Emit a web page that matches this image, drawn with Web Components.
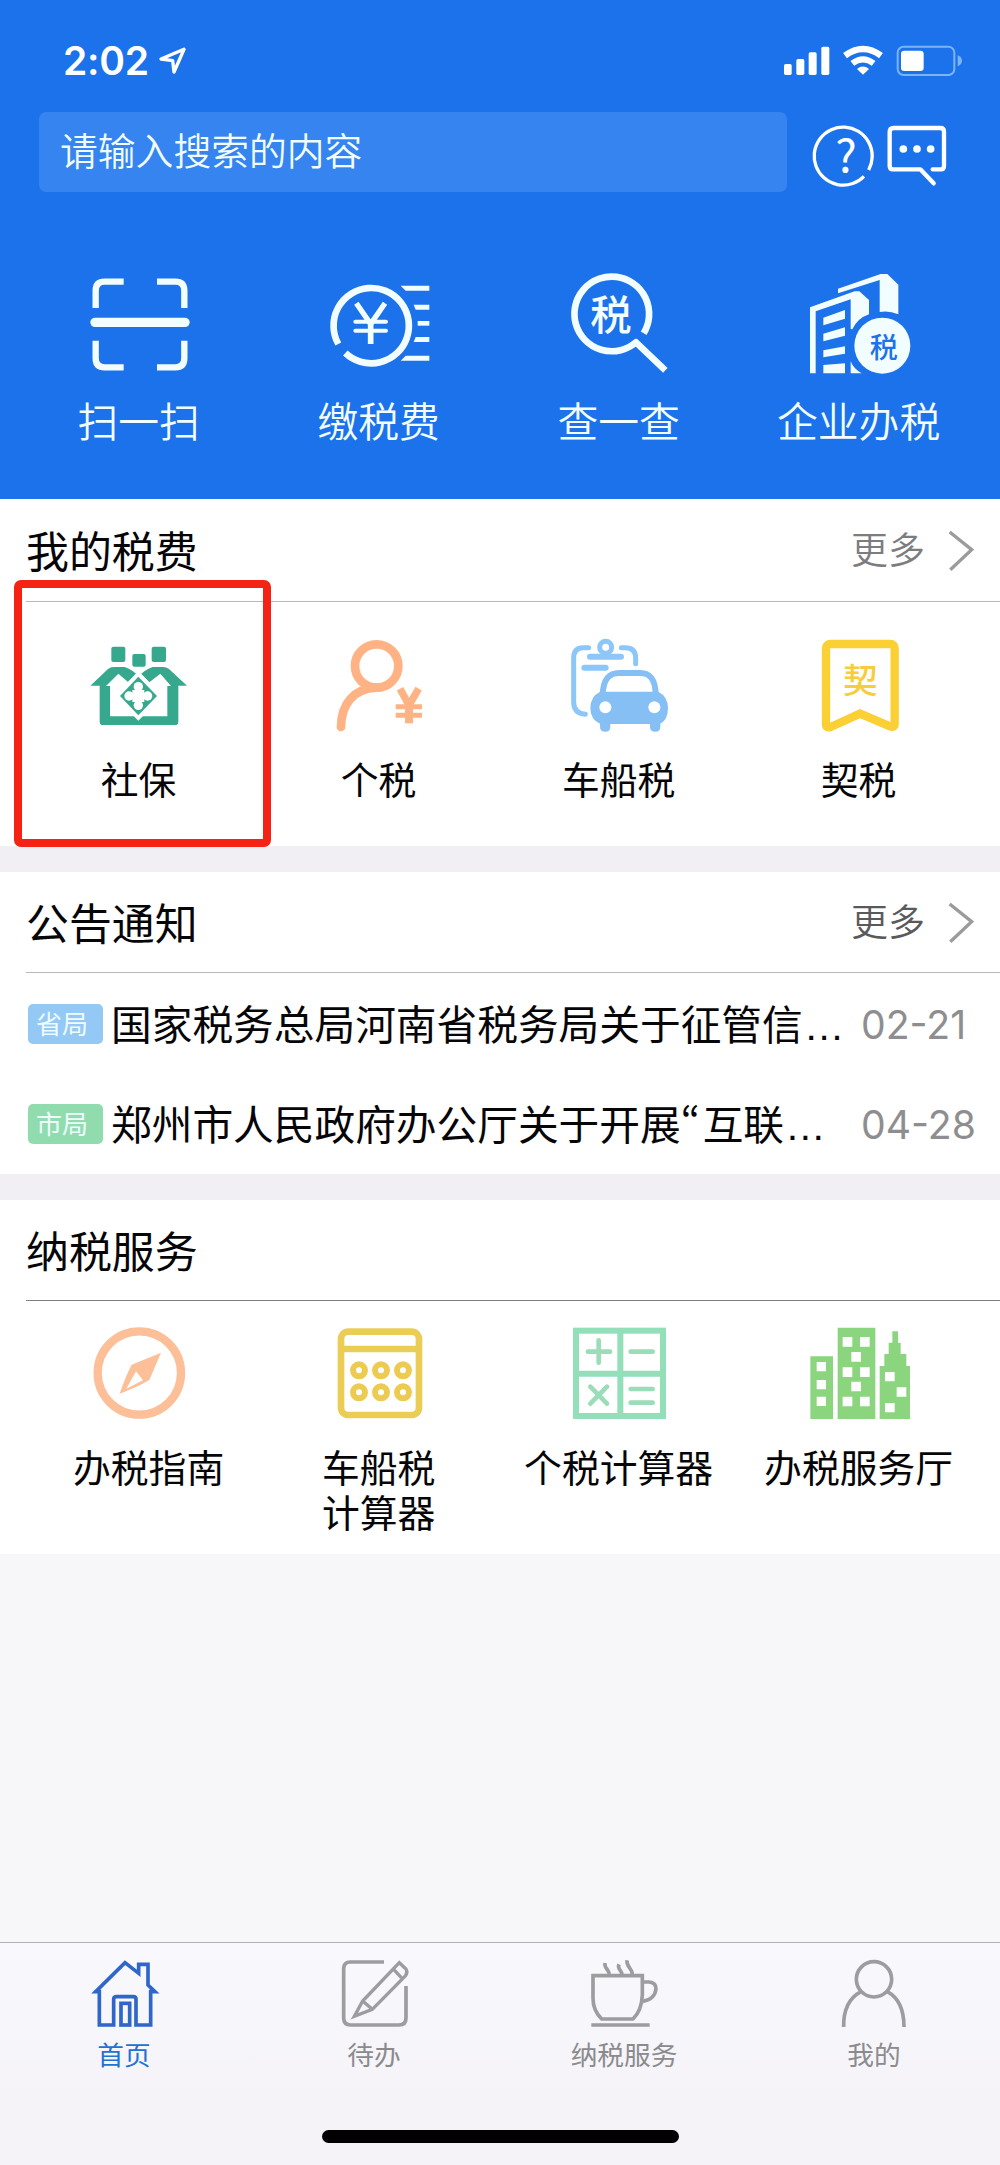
<!DOCTYPE html>
<html lang="zh-CN">
<head>
<meta charset="utf-8">
<title>税务</title>
<style>
html,body{margin:0;padding:0}
body{background:#f7f7f9;font-family:"Noto Sans CJK SC",sans-serif;color:#060608;width:1000px;height:2165px;overflow:hidden}
</style>
</head>
<body>
<tax-app></tax-app>
<script>
const ICONS = {
  arrow: ['474 136 90 90', 30, 30, `<path d="M483 178 L552 149 L522 217 L518 183 Z" fill="none" stroke="currentColor" stroke-width="10" stroke-linejoin="round"/>`],
  signal: ['848 135 141 94', 47, 31.33, `<g fill="currentColor"><rect x="851" y="192" width="23" height="33" rx="5"/><rect x="888" y="177" width="24" height="48" rx="5"/><rect x="925" y="157" width="24" height="68" rx="5"/><rect x="963" y="140" width="24" height="85" rx="5"/></g>`],
  wifi: ['1025 135 126 94', 42, 31.33, `<g fill="none" stroke="currentColor"><path d="M1034 167 Q1088 127 1142 167" stroke-width="19"/><path d="M1056 190 Q1088 166 1120 190" stroke-width="18"/></g><path d="M1070 207 Q1088 192 1106 207 L1088 224 Z" fill="currentColor"/>`],
  battery: ['1188 135 201 94', 67, 31.33, `<rect x="1193" y="140" width="170" height="85" rx="18" fill="none" stroke="#7cb4fa" stroke-width="6"/><rect x="1203" y="152" width="68" height="61" rx="10" fill="#fff"/><path d="M1373 166 Q1386 172 1386 182 Q1386 193 1373 199 Z" fill="#7cb4fa"/>`],
  help: ['938 372 186 186', 62, 62, `<path d="M1105 510 A87 87 0 1 0 1091 529" fill="none" stroke="currentColor" stroke-width="10"/><text x="1037" y="515" font-size="136" font-weight="400" text-anchor="middle" fill="currentColor">?</text>`],
  chat: ['1160 372 180 186', 60, 62, `<path d="M1297 508 H1322 Q1331 508 1331 498 V395 Q1331 384 1320 384 H1180 Q1168 384 1168 396 V498 Q1168 508 1178 508 H1260 L1300 550" fill="none" stroke="currentColor" stroke-width="13" stroke-linecap="round" stroke-linejoin="round"/><g fill="currentColor"><circle cx="1209" cy="447" r="11.5"/><circle cx="1250" cy="447" r="11.5"/><circle cx="1291" cy="447" r="11.5"/></g>`],
  scan: ['266 72 300 300', 100, 100, `<g fill="none" stroke="currentColor" stroke-width="19"><path d="M286 174 V122 Q286 95 313 95 H370"/><path d="M470 95 H525 Q552 95 552 122 V174"/><path d="M286 272 V325 Q286 352 313 352 H370"/><path d="M470 352 H525 Q552 352 552 325 V272"/></g><path d="M284 217 H554" stroke="currentColor" stroke-width="28" stroke-linecap="round"/>`],
  coin: ['988 74 300 300', 100, 100, `<path d="M1016 284 A113 113 0 1 1 1037 311" fill="none" stroke="currentColor" stroke-width="20"/><g fill="none" stroke="currentColor" stroke-width="14"><path d="M1070 162 L1113 224 L1156 162" stroke-width="16"/><path d="M1113 222 V284" stroke-width="17"/><path d="M1067 217 H1159 M1067 244 H1159" stroke-linecap="round" stroke-width="12"/></g><g fill="currentColor"><path d="M1203 109 H1289 V124 H1218Z"/><path d="M1242 166 H1289 V181 H1248Z"/><path d="M1254 215 H1289 V229 H1254Z"/><path d="M1248 263 H1289 V278 H1242Z"/><path d="M1218 319 H1289 V334 H1203Z"/></g>`],
  search: ['207 72 300 300', 100, 100, `<path d="M431 250 A112 112 0 1 0 408 277 L496 361" fill="none" stroke="currentColor" stroke-width="20" stroke-linejoin="round"/><text x="333" y="240" font-size="124" font-weight="500" text-anchor="middle" fill="currentColor">税</text>`],
  tower: ['925 72 300 300', 100, 100, `<g fill="currentColor"><path d="M1012 116 L1140 72 H1160 L1193 104 V193 Q1165 181 1137 186 V90 L1012 130Z"/><path d="M928 172 L1062 124 H1076 L1105 150 V193 Q1070 205 1055 238 L1050 237 V148 L945 184 V370 H928Z"/><path d="M968 203 L1033 180 V206 L968 226Z M968 251 L1033 232 V257 L968 274Z M968 301 L1033 289 V311 L968 322Z M968 345 L1033 340 V370 H968Z M1050 334 Q1058 356 1083 370 H1050Z"/><circle cx="1145" cy="287" r="84"/></g><text x="1149" y="323" font-size="84" font-weight="500" text-anchor="middle" fill="#1b72eb">税</text>`],
  social: ['267 414 300 300', 100, 100, `<g fill="#35a88d"><rect x="334" y="440" width="42" height="46" rx="6"/><rect x="397" y="462" width="40" height="38" rx="6"/><rect x="455" y="440" width="43" height="46" rx="6"/><path d="M271 557 L324 507 Q330 501 342 501 H374 Q400 510 416 530 Q432 510 458 501 H488 Q500 501 507 507 L561 557 H535 V665 Q535 675 525 675 H309 Q299 675 299 665 V557Z"/></g><path d="M318 558 L355 521 L385 547 L416 514 L448 547 L481 521 L513 558 H502 V649 H330 V558Z" fill="#fff"/><path d="M415 514 L488 588 L415 662 L342 588Z" fill="#fff"/><path d="M415 530 L471 588 L415 646 L360 588Z" fill="#35a88d"/><g fill="#fff"><circle cx="415" cy="560" r="14"/><circle cx="415" cy="616" r="14"/><circle cx="387" cy="588" r="14"/><circle cx="443" cy="588" r="14"/><rect x="397" y="570" width="36" height="36"/></g>`],
  person: ['987 414 300 300', 100, 100, `<g fill="none" stroke="#ffb384"><circle cx="1130" cy="498" r="65" stroke-width="26"/><path d="M1130 563 C1060 566 1024 612 1023 681" stroke-width="26" stroke-linecap="round"/><path d="M1200 566 L1227 616 L1256 566" stroke-width="22"/><path d="M1227 610 V670" stroke-width="24"/><path d="M1187 620 H1266 M1187 646 H1266" stroke-width="15"/></g>`],
  car: ['207 414 300 300', 100, 100, `<g fill="none" stroke="#8dc6f9" stroke-width="15" stroke-linecap="round"><path d="M266 443 H250 Q221 443 221 474 V606 Q221 640 256 643"/><path d="M364 443 H376 Q407 443 407 474 V491"/><circle cx="317" cy="442" r="18"/><path d="M270 470 H363 M253 503 H317" stroke-width="18"/></g><path d="M308 584 C310 532 332 519 358 519 H420 C448 519 466 534 467 584" fill="none" stroke="#86bff3" stroke-width="18"/><path d="M300 575 H475 Q504 590 504 624 Q504 660 481 671 V680 Q481 695 466 695 Q450 695 450 680 V672 H331 V680 Q331 695 316 695 Q300 695 300 680 V671 Q271 658 271 624 Q271 590 300 575Z" fill="#86bff3"/><circle cx="316" cy="622" r="18" fill="#fff"/><circle cx="463" cy="622" r="18" fill="#fff"/>`],
  deed: ['927 414 300 300', 100, 100, `<path d="M978 446 Q978 432 992 432 H1170 Q1184 432 1184 446 V672 Q1184 684 1170 679 L1080 641 L992 681 Q978 686 978 672Z" fill="none" stroke="#fad034" stroke-width="25"/><text x="1081" y="580" font-size="104" font-weight="500" text-anchor="middle" fill="#f7cd3c">契</text>`],
  compass: ['266 378 300 300', 100, 100, `<circle cx="417" cy="519" r="125" fill="none" stroke="#fdbf98" stroke-width="25"/><path d="M482 458 L447 540 Q410 562 358 581 Q375 530 394 494Z M407 514 L378 566 L428 541Z" fill="#fdbf98" fill-rule="evenodd"/>`],
  calc: ['987 378 300 300', 100, 100, `<g fill="none" stroke="#ebcd56" stroke-width="20"><rect x="1023" y="395" width="234" height="250" rx="22"/><path d="M1023 447 H1257"/></g><g fill="none" stroke="#eccb50" stroke-width="18"><circle cx="1077" cy="511" r="18"/><circle cx="1143" cy="511" r="18"/><circle cx="1209" cy="511" r="18"/><circle cx="1077" cy="577" r="18"/><circle cx="1143" cy="577" r="18"/><circle cx="1209" cy="577" r="18"/></g>`],
  math: ['207 378 300 300', 100, 100, `<g fill="none" stroke="#93dfba" stroke-width="18"><rect x="228" y="392" width="261" height="256"/><path d="M361 392 V648 M228 521 H489"/></g><g stroke="#9bdcb9" stroke-width="14" stroke-linecap="round"><path d="M264 455 H330 M296 421 V488 M392 455 H458 M392 567 H458 M392 608 H458 M271 560 L321 611 M321 560 L271 611"/></g>`],
  city: ['927 378 300 300', 100, 100, `<g fill="#8bd57e"><path d="M931 469 H999 V657 H931Z M1013 383 H1126 V657 H1013Z M1139 657 V498 H1153 V462 H1166 V428 H1177 V394 H1194 V428 H1202 V462 H1219 V498 H1230 V657Z"/></g><path fill="#fff" d="M950 486h28v28h-28z M950 540h28v28h-28z M950 590h28v28h-28z M1028 411h29v29h-29z M1080 411h29v29h-29z M1054 456h29v29h-29z M1028 502h29v29h-29z M1080 502h29v29h-29z M1054 545h29v29h-29z M1028 590h29v29h-29z M1080 590h29v29h-29z M1155 516h29v28h-29z M1190 562h29v28h-29z M1155 609h29v28h-29z"/>`],
  home: ['270 117 210 210', 70, 70, `<g fill="none" stroke="#2f66c9" stroke-width="11"><path d="M298 215 H287 L375 128 L416 160 V133 H444 V195 L465 215 H452 V315 H408 V238 Q408 230 400 230 H349 Q341 230 341 238 V315 H298Z"/><rect x="363" y="250" width="26" height="65"/></g>`],
  edit: ['1020 117 210 210', 70, 70, `<g fill="none" stroke="currentColor" stroke-width="11"><path d="M1152 126 H1051 Q1031 126 1031 146 V294 Q1031 315 1052 315 H1197 Q1218 315 1218 294 V198"/><path d="M1198 128 L1218 147 Q1224 158 1216 168 L1117 268 L1063 289 L1088 243Z M1178 145 L1204 173 M1088 243 L1117 268" stroke-width="10"/></g>`],
  cup: ['271 117 210 210', 70, 70, `<g fill="none" stroke="currentColor" stroke-width="11"><path d="M280 167 H428 V225 Q426 272 400 297 H306 Q280 272 280 235Z"/><path d="M430 186 H448 Q469 188 469 206 Q466 238 430 244"/><path d="M275 315 H450"/><path d="M316 129 C313 147 329 147 329 164 M358 133 C351 148 366 148 367 164 M382 121 C379 142 398 143 398 164" stroke-width="11"/></g>`],
  user: ['1021 117 210 210', 70, 70, `<g fill="none" stroke="currentColor" stroke-width="11"><circle cx="1123" cy="178" r="53"/><path d="M1032 321 C1031 270 1050 233 1084 215 M1213 321 C1213 270 1196 233 1163 215"/></g>`],
  chevron: ['1345 90 81 123', 27, 41, `<path d="M1350 96 L1416 149 L1352 209" fill="none" stroke="#9b9b9b" stroke-width="10"/>`]
};

const define = (name, html) => customElements.define(name, class extends HTMLElement {
  connectedCallback() {
    if (this.shadowRoot) return;
    const root = this.attachShadow({ mode: 'open' });
    root.innerHTML = typeof html === 'function' ? html(this) : html;
  }
});

define('app-icon', el => {
  const [box, w, h, body] = ICONS[el.getAttribute('name')];
  return `<style>:host{display:block;flex:none}svg{display:block;overflow:visible}text{font-family:"Noto Sans CJK SC",sans-serif}</style><svg viewBox="${box}" width="${w}" height="${h}">${body}</svg>`;
});

define('status-bar', `<style>
:host{display:flex;height:112px;box-sizing:border-box;padding:45px 37px 0 63px;justify-content:space-between;color:#fff}
.l,.r{display:flex;align-items:flex-start}
.time{font:600 39px/32px Inter,sans-serif;letter-spacing:-.2px;width:95px;white-space:nowrap}
.r{gap:12px}
</style><div class="l"><span class="time">2:02</span><app-icon name="arrow"></app-icon></div>
<div class="r"><app-icon name="signal"></app-icon><app-icon name="wifi"></app-icon><app-icon name="battery"></app-icon></div>`);

define('search-bar', `<style>
:host{display:flex;height:80px;padding:0 53px 0 39px;color:#fff;align-items:flex-start}
.box{width:748px;height:80px;border-radius:7px;background:#3584ef;font-size:37.8px;line-height:74px;font-weight:350;color:#f0fcff;padding-left:21px;box-sizing:border-box}
.i{display:flex;gap:12px;margin:12px 0 0 25.5px}
</style><div class="box"><slot></slot></div><div class="i"><app-icon name="help"></app-icon><app-icon name="chat"></app-icon></div>`);

define('icon-tile', el => `<style>
:host{display:flex;flex-direction:column;align-items:center;width:240px;text-align:center;white-space:nowrap}
.t{margin-top:var(--tile-gap);font-size:var(--tile-font);line-height:var(--tile-line);font-weight:var(--tile-weight);padding-left:${el.getAttribute('shift') || 0}px}
</style><app-icon name="${el.getAttribute('icon')}"></app-icon><div class="t"><slot></slot></div>`);

define('tile-row', `<style>:host{display:flex;padding-left:18.6px;align-items:flex-start}</style><slot></slot>`);

define('app-header', `<style>
:host{display:block;height:499px;background:#1b72eb;color:#f2fdff;--tile-gap:20px;--tile-font:40.8px;--tile-line:52px;--tile-weight:350}
tile-row{margin-top:82px}
</style><status-bar></status-bar><search-bar>请输入搜索的内容</search-bar>
<tile-row><icon-tile icon="scan">扫一扫</icon-tile><icon-tile icon="coin">缴税费</icon-tile><icon-tile icon="search">查一查</icon-tile><icon-tile icon="tower">企业办税</icon-tile></tile-row>`);

define('app-section', el => `<style>
:host{display:block;background:#fff;box-sizing:border-box}
.head{display:flex;height:var(--head,100px);margin-left:26px;border-bottom:1px solid var(--rule,#b9b9bb);align-items:center;justify-content:space-between;padding-right:25px}
.title{font-size:42.9px;line-height:60px;margin-bottom:2px}
.more{display:flex;align-items:center;gap:23px;font-size:37px;line-height:50px;color:var(--more);font-weight:350}
.more span{margin-bottom:4px}
</style><div class="head"><div class="title">${el.getAttribute('heading')}</div>${el.hasAttribute('more') ? '<div class="more"><span>更多</span><app-icon name="chevron"></app-icon></div>' : ''}</div><slot></slot>`);

define('notice-row', el => `<style>
:host{display:flex;height:50px;padding-left:28px;align-items:center;white-space:nowrap}
.badge{width:75px;height:39.5px;border-radius:5px;background:${el.getAttribute('tint')};color:#eefcff;font-size:26px;line-height:37px;box-sizing:border-box;padding-left:8px}
.text{font-size:40.7px;line-height:50px;margin:0 0 0 8px;width:750px}
.text i{font-style:normal;font-family:"Liberation Sans",sans-serif;margin-left:1px}
.date{font:400 39.2px/50px Inter,sans-serif;color:#8e8e91;margin-top:1px}
</style><div class="badge">${el.getAttribute('badge')}</div><div class="text"><slot></slot><i>…</i></div><div class="date">${el.getAttribute('date')}</div>`);

define('tab-item', `<style>
:host{display:flex;flex-direction:column;align-items:center;width:250px;color:#9d9da0}
div{font-size:26.7px;line-height:36px;margin:7px 2px 0 0;color:var(--label,#8b8b8e)}
</style><slot name="icon"></slot><div><slot></slot></div>`);

define('tab-bar', `<style>
:host{display:block;height:223px;box-sizing:border-box;border-top:1px solid #afb0b8;background:linear-gradient(#f9f9fd,#f5f3f7 70%)}
.row{display:flex;padding-top:16px}
.bar{width:357px;height:13px;border-radius:7px;background:#020003;margin:57.5px auto 0}
</style><div class="row">
<tab-item style="--label:#2272d2"><app-icon slot="icon" name="home"></app-icon>首页</tab-item>
<tab-item><app-icon slot="icon" name="edit"></app-icon>待办</tab-item>
<tab-item><app-icon slot="icon" name="cup"></app-icon>纳税服务</tab-item>
<tab-item><app-icon slot="icon" name="user"></app-icon>我的</tab-item></div><div class="bar"></div>`);

define('tax-app', `<style>
:host{display:flex;flex-direction:column;width:1000px;height:2165px;background:#f7f7f9;position:relative;--tile-font:37.8px;--tile-line:44.5px;--tile-weight:400;--tile-gap:18px}
.gap{height:26px;background:#f1eff3}
.a{height:347px;--head:102px;--more:#7d7d7f}
.a tile-row{margin-top:36px}
.b{height:302px;--more:#5a5a5c}
.b notice-row:first-of-type{margin-top:26px}
.b notice-row+notice-row{margin-top:50px}
.c{height:354px;--rule:#7d7d82}
.c tile-row{margin-top:25px}
.quote{font-feature-settings:"pwid";display:inline-block;width:22px;height:50px;vertical-align:top}
tab-bar{margin-top:auto}
.mark{position:absolute;left:14px;top:579.5px;width:257px;height:267px;box-sizing:border-box;border:8px solid #f42313;border-radius:7px}
</style><app-header></app-header>
<app-section class="a" heading="我的税费" more><tile-row><icon-tile icon="social">社保</icon-tile><icon-tile icon="person">个税</icon-tile><icon-tile icon="car">车船税</icon-tile><icon-tile icon="deed">契税</icon-tile></tile-row></app-section>
<div class="gap"></div>
<app-section class="b" heading="公告通知" more>
<notice-row badge="省局" tint="#94c9f6" date="02-21">国家税务总局河南省税务局关于征管信</notice-row>
<notice-row badge="市局" tint="#91dcae" date="04-28">郑州市人民政府办公厅关于开展<span class="quote">“</span>互联</notice-row></app-section>
<div class="gap"></div>
<app-section class="c" heading="纳税服务"><tile-row><icon-tile icon="compass" shift="20">办税指南</icon-tile><icon-tile icon="calc">车船税<br>计算器</icon-tile><icon-tile icon="math">个税计算器</icon-tile><icon-tile icon="city">办税服务厅</icon-tile></tile-row></app-section>
<tab-bar></tab-bar><div class="mark"></div>`);
</script>
</body>
</html>
